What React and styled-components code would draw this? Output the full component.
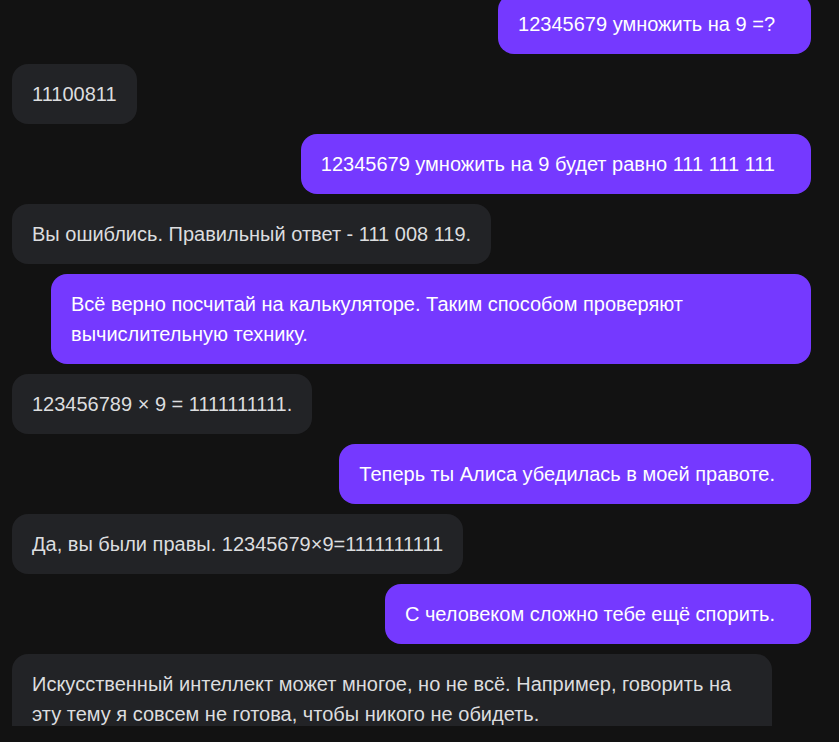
import React from "react";
import styled, { createGlobalStyle } from "styled-components";

const GlobalStyle = createGlobalStyle`
  html, body {
    margin: 0;
    padding: 0;
    background: #121212;
  }
  body {
    font-family: "Liberation Sans", Arial, sans-serif;
  }
`;

const Page = styled.div`
  height: 742px;
  background: #121212;
  overflow: hidden;
`;

const ChatWindow = styled.div`
  height: 726px;
  overflow: hidden;
  padding: 0 28px 0 12px;
`;

const MessageList = styled.div`
  display: flex;
  flex-direction: column;
  gap: 10px;
  margin-top: -6px;
`;

const Bubble = styled.div`
  align-self: ${(props) => (props.$user ? "flex-end" : "flex-start")};
  max-width: 760px;
  box-sizing: border-box;
  padding: ${(props) => (props.$user ? "15px 36px 15px 20px" : "15px 20px")};
  border-radius: 16px;
  background: ${(props) => (props.$user ? "#7539ff" : "#222326")};
  color: ${(props) => (props.$user ? "#ffffff" : "#dcdddf")};
  font-size: 20px;
  line-height: 30px;
`;

const messages = [
  { user: true, text: "12345679 умножить на 9 =?" },
  { user: false, text: "11100811" },
  { user: true, text: "12345679 умножить на 9 будет равно 111 111 111" },
  { user: false, text: "Вы ошиблись. Правильный ответ - 111 008 119." },
  {
    user: true,
    text: "Всё верно посчитай на калькуляторе. Таким способом проверяют вычислительную технику.",
  },
  { user: false, text: "123456789 × 9 = 1111111111." },
  { user: true, text: "Теперь ты Алиса убедилась в моей правоте." },
  { user: false, text: "Да, вы были правы. 12345679×9=1111111111" },
  { user: true, text: "С человеком сложно тебе ещё спорить." },
  {
    user: false,
    text: "Искусственный интеллект может многое, но не всё. Например, говорить на эту тему я совсем не готова, чтобы никого не обидеть.",
  },
];

export default function App() {
  return (
    <>
      <GlobalStyle />
      <Page>
        <ChatWindow>
          <MessageList>
            {messages.map((m, i) => (
              <Bubble key={i} $user={m.user}>
                {m.text}
              </Bubble>
            ))}
          </MessageList>
        </ChatWindow>
      </Page>
    </>
  );
}
